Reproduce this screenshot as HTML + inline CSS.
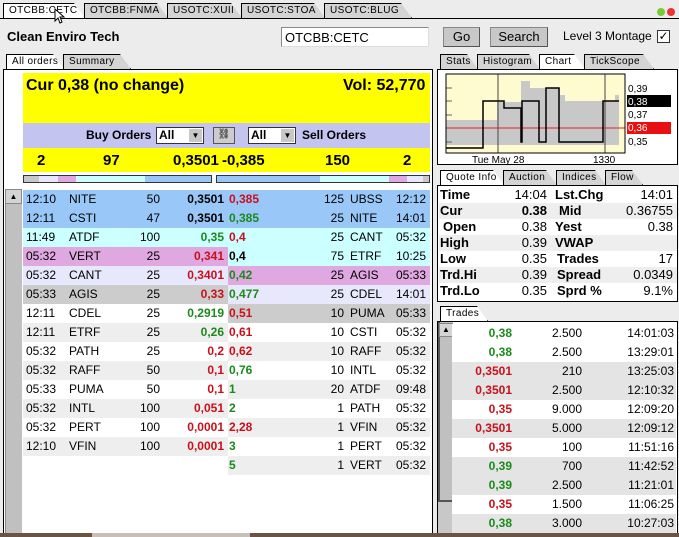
<!DOCTYPE html>
<html><head><meta charset="utf-8"><style>
*{box-sizing:border-box;margin:0;padding:0}
body{width:679px;height:537px;overflow:hidden;background:#ececec;font-family:"Liberation Sans",Arial,sans-serif;font-size:12px;position:relative;color:#000}
.a{position:absolute}
.tab{position:absolute;height:15px;border:1px solid #000;border-bottom:none;background:#d4d4d4;font-size:10px;letter-spacing:0.4px;padding:1px 0 0 5px;white-space:nowrap;clip-path:polygon(0 0,calc(100% - 11px) 0,100% 100%,0 100%)}
.tab.on{background:#fff}
.row{position:absolute;height:19px;line-height:19px;font-size:12px;width:205px}
.row span{position:absolute}
.g{color:#1a8a1a;font-weight:bold}.r{color:#c8101a;font-weight:bold}.k{font-weight:bold}
.q{position:absolute;left:1px;width:238px;height:16px;line-height:16px;font-size:13px}
.q span{position:absolute}
.b{font-weight:bold}
.t{position:absolute;left:452px;width:224px;height:19px;line-height:19px;font-size:12px}
.t span{position:absolute}
.btn{position:absolute;background:#c8c8c8;border:1px solid #888;border-right-color:#555;border-bottom-color:#555;font-size:13px;text-align:center;line-height:18px}
</style></head><body>
<div class="a" style="left:0;top:18px;width:679px;height:1px;background:#000"></div>
<div class="tab on" style="left:3px;top:3px;width:82px">OTCBB:CETC</div>
<div class="tab" style="left:84px;top:3px;width:84px">OTCBB:FNMA</div>
<div class="tab" style="left:167px;top:3px;width:75px">USOTC:XUII</div>
<div class="tab" style="left:241px;top:3px;width:84px">USOTC:STOA</div>
<div class="tab" style="left:324px;top:3px;width:88px">USOTC:BLUG</div>
<div class="a" style="left:657px;top:8px;width:8px;height:8px;border-radius:50%;background:#7c3"></div>
<div class="a" style="left:667px;top:8px;width:8px;height:8px;border-radius:50%;background:#e33"></div>
<svg class="a" style="left:54px;top:8px" width="12" height="16"><path d="M1 1 L1 13 L4 10 L6 15 L8 14 L6 9 L10 9 Z" fill="#fff" stroke="#000"/></svg>

<div class="a" style="left:7px;top:29px;font-size:13px;font-weight:bold">Clean Enviro Tech</div>
<div class="a" style="left:281px;top:27px;width:148px;height:20px;background:#fff;border:1px solid #888;border-right-color:#ddd;border-bottom-color:#ddd;font-size:13px;padding:2px 3px">OTCBB:CETC</div>
<div class="btn" style="left:443px;top:27px;width:37px;height:20px">Go</div>
<div class="btn" style="left:490px;top:27px;width:58px;height:20px">Search</div>
<div class="a" style="left:563px;top:29px;font-size:12px">Level 3 Montage</div>
<div class="a" style="left:657px;top:30px;width:13px;height:13px;background:#fff;border:1px solid #333;font-size:12px;line-height:11px;text-align:center">✓</div>

<div class="tab on" style="left:6px;top:54px;width:58px">All orders</div>
<div class="tab" style="left:63px;top:54px;width:68px">Summary</div>
<div class="a" style="left:3px;top:69px;width:430px;height:468px;background:#fff;border:1px solid #000"></div>
<div class="a" style="left:23px;top:73px;width:407px;height:50px;background:#ffff00"></div>
<div class="a" style="left:26px;top:77px;font-size:16px;font-weight:bold">Cur 0,38 (no change)</div>
<div class="a" style="left:343px;top:77px;font-size:16px;font-weight:bold">Vol: 52,770</div>
<div class="a" style="left:23px;top:123px;width:407px;height:25px;background:#c4c4f0"></div>
<div class="a" style="left:86px;top:128px;font-size:12px;font-weight:bold">Buy Orders</div>
<div class="a" style="left:156px;top:127px;width:48px;height:17px;background:#fff;border:1px solid #333;font-weight:bold;padding-left:2px;line-height:15px">All<span style="position:absolute;right:1px;top:1px;width:13px;height:13px;background:#c8c8c8;font-size:8px;text-align:center;line-height:13px">▼</span></div>
<div class="a" style="left:213px;top:127px;width:22px;height:17px;background:#ccc;border:1px solid #555;font-size:10px;text-align:center;line-height:14px">⛓</div>
<div class="a" style="left:248px;top:127px;width:48px;height:17px;background:#fff;border:1px solid #333;font-weight:bold;padding-left:2px;line-height:15px">All<span style="position:absolute;right:1px;top:1px;width:13px;height:13px;background:#c8c8c8;font-size:8px;text-align:center;line-height:13px">▼</span></div>
<div class="a" style="left:302px;top:128px;font-size:12px;font-weight:bold">Sell Orders</div>
<div class="a" style="left:23px;top:148px;width:407px;height:24px;background:#ffff00;font-size:15px;font-weight:bold;line-height:26px">
<span class="a" style="left:14px">2</span><span class="a" style="left:80px">97</span><span class="a" style="left:150px">0,3501</span><span class="a" style="left:199px">-0,385</span><span class="a" style="left:302px">150</span><span class="a" style="left:380px">2</span></div>
<div class="a" style="left:23px;top:175px;width:189px;height:8px;border:1px solid #333;background:linear-gradient(90deg,#c8c8c8 0 15px,#e8e8fc 15px 34px,#e0a8e0 34px 52px,#ccffff 52px 121px,#99c8f8 121px)"></div>
<div class="a" style="left:216px;top:175px;width:214px;height:8px;border:1px solid #333;background:linear-gradient(90deg,#99c8f8 0 103px,#ccffff 103px 172px,#e0a8e0 172px 190px,#e8e8fc 190px 206px,#c8c8c8 206px)"></div>
<div class="a" style="left:5px;top:189px;width:17px;height:348px;background:#c0c0c0;border-left:1px solid #888"></div>
<div class="a" style="left:5px;top:189px;width:17px;height:15px;background:#d4d4d4;border:1px solid #888;font-size:8px;text-align:center;line-height:13px">▲</div>

<div id="L"></div>
<div class="tab" style="left:440px;top:54px;width:38px">Stats</div>
<div class="tab" style="left:477px;top:54px;width:63px">Histogram</div>
<div class="tab on" style="left:539px;top:54px;width:46px">Chart</div>
<div class="tab" style="left:584px;top:54px;width:70px">TickScope</div>
<div class="a" style="left:437px;top:69px;width:241px;height:96px;background:#fff;border:1px solid #000"></div>
<svg class="a" style="left:437px;top:69px" width="241" height="96">
<g transform="translate(-437,-69)">
<rect x="446" y="74" width="179" height="79" fill="#fffbd0"/>
<polygon points="446,120 497,120 497,102 521,102 521,81 530,81 530,88 560,88 560,95 565,95 565,101 615,101 615,95 619,95 619,145 446,145" fill="#c8c8c8"/>
<g stroke="#666" stroke-width="1"><line x1="446" y1="88" x2="452" y2="88"/><line x1="446" y1="101" x2="452" y2="101"/><line x1="446" y1="115" x2="452" y2="115"/><line x1="446" y1="142" x2="452" y2="142"/></g>
<line x1="498" y1="74" x2="498" y2="153" stroke="#444"/><line x1="605" y1="74" x2="605" y2="153" stroke="#444"/>
<line x1="446" y1="128" x2="625" y2="128" stroke="#e02020"/>
<polyline points="446,148 483,148 483,101 504,101 504,108 521,108 521,142 522,142 522,101 539,101 539,142 546,142 546,88 559,88 559,142 603,142 603,101 619,101" fill="none" stroke="#000" stroke-width="1.5"/>
<rect x="446" y="74" width="179" height="79" fill="none" stroke="#000"/>
<rect x="627" y="95" width="44" height="12" fill="#000"/>
<rect x="627" y="122" width="44" height="12" fill="#e81010"/>
<g font-family="Liberation Sans" font-size="10"><text x="628" y="92">0,39</text><text x="628" y="105" fill="#fff">0,38</text><text x="628" y="118">0,37</text><text x="628" y="131" fill="#fff">0,36</text><text x="628" y="145">0,35</text>
<text x="472" y="163">Tue May 28</text><text x="593" y="163">1330</text></g>
</g></svg>

<div class="tab on" style="left:440px;top:170px;width:64px">Quote Info</div>
<div class="tab" style="left:503px;top:170px;width:54px">Auction</div>
<div class="tab" style="left:556px;top:170px;width:50px">Indices</div>
<div class="tab" style="left:605px;top:170px;width:38px">Flow</div>
<div class="a" style="left:437px;top:185px;width:241px;height:117px;background:#fff;border:1px solid #000">
<div class="q" style="top:1px"><span class="b" style="left:1px">Time</span><span style="right:130px">14:04</span><span class="b" style="left:116px">Lst.Chg</span><span style="right:4px">14:01</span></div>
<div class="q" style="top:17px;background:#eee"><span class="b" style="left:1px">Cur</span><span class="b" style="right:130px">0.38</span><span class="b" style="left:120px">Mid</span><span style="right:4px">0.36755</span></div>
<div class="q" style="top:33px"><span class="b" style="left:4px">Open</span><span style="right:130px">0.38</span><span class="b" style="left:116px">Yest</span><span style="right:4px">0.38</span></div>
<div class="q" style="top:49px;background:#eee"><span class="b" style="left:1px">High</span><span style="right:130px">0.39</span><span class="b" style="left:116px">VWAP</span></div>
<div class="q" style="top:65px"><span class="b" style="left:1px">Low</span><span style="right:130px">0.35</span><span class="b" style="left:118px">Trades</span><span style="right:4px">17</span></div>
<div class="q" style="top:81px;background:#eee"><span class="b" style="left:1px">Trd.Hi</span><span style="right:130px">0.39</span><span class="b" style="left:118px">Spread</span><span style="right:4px">0.0349</span></div>
<div class="q" style="top:97px"><span class="b" style="left:1px">Trd.Lo</span><span style="right:130px">0.35</span><span class="b" style="left:118px">Sprd %</span><span style="right:4px">9.1%</span></div>
</div>
<div class="tab on" style="left:440px;top:306px;width:48px">Trades</div>
<div class="a" style="left:437px;top:321px;width:241px;height:216px;background:#fff;border:1px solid #000"></div>
<div class="a" style="left:438px;top:322px;width:15px;height:211px;background:#c8c8c8"></div>
<div class="a" style="left:438px;top:322px;width:15px;height:180px;background:#c0c0c0;border-left:2px solid #555;border-bottom:2px solid #555"></div>
<div class="a" style="left:439px;top:323px;width:14px;height:14px;background:#d4d4d4;border:1px solid #888;font-size:8px;text-align:center;line-height:12px">▲</div>
<div id="T"></div>
<div class="a" style="left:0;top:533px;width:679px;height:4px;background:#6b5444"></div>
<div class="a" style="left:92px;top:533px;width:158px;height:4px;background:#c8c0b8"></div>
<script>
var L=[
["#99c8f8","12:10","NITE","50","0,3501","k","#99c8f8","0,385","r","125","UBSS","12:12"],
["#99c8f8","12:11","CSTI","47","0,3501","k","#99c8f8","0,385","g","25","NITE","14:01"],
["#ccffff","11:49","ATDF","100","0,35","g","#ccffff","0,4","r","25","CANT","05:32"],
["#e0a8e0","05:32","VERT","25","0,341","r","#ccffff","0,4","k","75","ETRF","10:25"],
["#e8e8fc","05:32","CANT","25","0,3401","r","#e0a8e0","0,42","g","25","AGIS","05:33"],
["#cccccc","05:33","AGIS","25","0,33","r","#e8e8fc","0,477","g","25","CDEL","14:01"],
["#ffffff","12:11","CDEL","25","0,2919","g","#cccccc","0,51","r","10","PUMA","05:33"],
["#eeeeee","12:11","ETRF","25","0,26","g","#ffffff","0,61","r","10","CSTI","05:32"],
["#ffffff","05:32","PATH","25","0,2","r","#eeeeee","0,62","r","10","RAFF","05:32"],
["#eeeeee","05:32","RAFF","50","0,1","r","#ffffff","0,76","g","10","INTL","05:32"],
["#ffffff","05:33","PUMA","50","0,1","r","#eeeeee","1","g","20","ATDF","09:48"],
["#eeeeee","05:32","INTL","100","0,051","r","#ffffff","2","g","1","PATH","05:32"],
["#ffffff","05:32","PERT","100","0,0001","r","#eeeeee","2,28","r","1","VFIN","05:32"],
["#eeeeee","12:10","VFIN","100","0,0001","r","#ffffff","3","g","1","PERT","05:32"],
[null,"","","","","","#eeeeee","5","g","1","VERT","05:32"]];
var h="";
L.forEach(function(r,i){var y=190+i*19;
if(r[0])h+='<div class="row" style="left:23px;top:'+y+'px;background:'+r[0]+'"><span style="left:3px">'+r[1]+'</span><span style="left:46px">'+r[2]+'</span><span style="right:68px">'+r[3]+'</span><span class="'+r[5]+'" style="right:4px">'+r[4]+'</span></div>';
h+='<div class="row" style="left:228px;width:202px;top:'+y+'px;background:'+r[6]+'"><span class="'+r[8]+'" style="left:1px">'+r[7]+'</span><span style="right:86px">'+r[9]+'</span><span style="left:122px">'+r[10]+'</span><span style="right:4px">'+r[11]+'</span></div>';});
document.getElementById("L").innerHTML=h;
var T=[["#fff","0,38","g","2.500","14:01:03"],["#fff","0,38","g","2.500","13:29:01"],["#e4e4e4","0,3501","r","210","13:25:03"],["#e4e4e4","0,3501","r","2.500","12:10:32"],["#fff","0,35","r","9.000","12:09:20"],["#e4e4e4","0,3501","r","5.000","12:09:12"],["#fff","0,35","r","100","11:51:16"],["#e4e4e4","0,39","g","700","11:42:52"],["#e4e4e4","0,39","g","2.500","11:21:01"],["#fff","0,35","r","1.500","11:06:25"],["#e4e4e4","0,38","g","3.000","10:27:03"]];
h="";T.forEach(function(r,i){h+='<div class="t" style="top:'+(324+i*19)+'px;background:'+r[0]+'"><span class="'+r[2]+'" style="right:164px">'+r[1]+'</span><span style="right:94px">'+r[3]+'</span><span style="right:2px">'+r[4]+'</span></div>';});
document.getElementById("T").innerHTML=h;
</script>
</body></html>
